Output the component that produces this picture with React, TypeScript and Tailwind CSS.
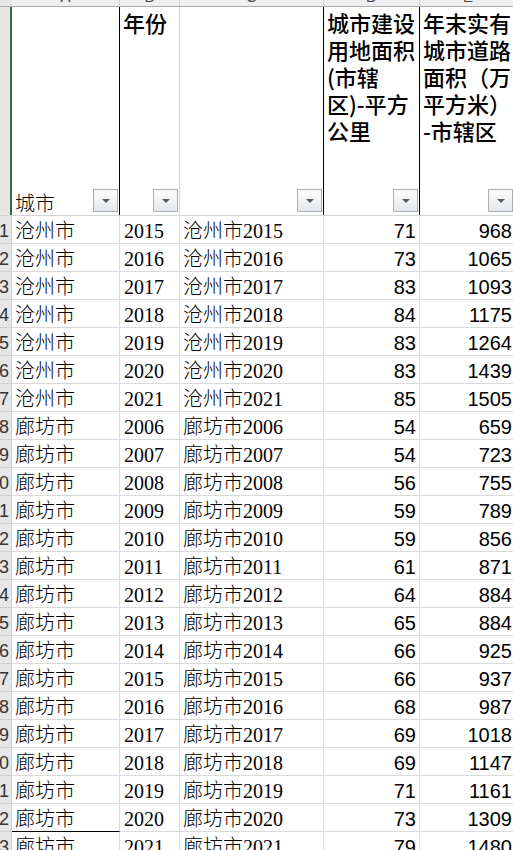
const rows: [string, number, number, number][] = [
  ['沧州市', 2015, 71, 968],
  ['沧州市', 2016, 73, 1065],
  ['沧州市', 2017, 83, 1093],
  ['沧州市', 2018, 84, 1175],
  ['沧州市', 2019, 83, 1264],
  ['沧州市', 2020, 83, 1439],
  ['沧州市', 2021, 85, 1505],
  ['廊坊市', 2006, 54, 659],
  ['廊坊市', 2007, 54, 723],
  ['廊坊市', 2008, 56, 755],
  ['廊坊市', 2009, 59, 789],
  ['廊坊市', 2010, 59, 856],
  ['廊坊市', 2011, 61, 871],
  ['廊坊市', 2012, 64, 884],
  ['廊坊市', 2013, 65, 884],
  ['廊坊市', 2014, 66, 925],
  ['廊坊市', 2015, 66, 937],
  ['廊坊市', 2016, 68, 987],
  ['廊坊市', 2017, 69, 1018],
  ['廊坊市', 2018, 69, 1147],
  ['廊坊市', 2019, 71, 1161],
  ['廊坊市', 2020, 73, 1309],
  ['廊坊市', 2021, 79, 1480],
];

function FilterButton() {
  return (
    <div className="absolute right-[1px] bottom-[3px] w-[25px] h-[23px] border border-[#a9aeb6] bg-gradient-to-b from-[#fdfdfd] to-[#e4e7eb] flex items-center justify-center">
      <div className="w-0 h-0 border-l-[4px] border-r-[4px] border-t-[4px] border-l-transparent border-r-transparent border-t-[#5a5a5a]" />
    </div>
  );
}

function ColLetter({ w, letter, last }: { w: string; letter: string; last?: boolean }) {
  return (
    <div className={`${w} shrink-0 h-full overflow-hidden flex justify-center ${last ? '' : 'border-r border-[#d2d2d2]'}`}>
      <span className="mt-[-12px] text-[15px] leading-[18px] text-[#444] font-['Liberation_Sans',sans-serif]">{letter}</span>
    </div>
  );
}

export default function App() {
  const serif = "font-['Liberation_Serif','Noto_Sans_CJK_SC',serif]";
  const sans = "font-['Liberation_Sans',sans-serif]";
  const head = "font-['Noto_Sans_CJK_SC',sans-serif] font-medium text-[22px] leading-[27px] text-black whitespace-nowrap";

  return (
    <div className="w-[513px] h-screen overflow-hidden bg-white">
      <div className="w-[620px]">
        {/* column letters strip */}
        <div className="flex h-[7px] bg-[#efefef] border-b border-[#ababab]">
          <div className="w-[12px] shrink-0 bg-[#e6e6e6]" />
          <ColLetter w="w-[108px]" letter="A" />
          <ColLetter w="w-[60px]" letter="B" />
          <ColLetter w="w-[144px]" letter="C" />
          <ColLetter w="w-[96px]" letter="D" />
          <ColLetter w="w-[96px]" letter="E" last />
        </div>

        {/* header row */}
        <div className="flex h-[209px] border-b border-[#d4d4d4]">
          <div className="w-[12px] shrink-0 bg-[#e6e6e6] border-r-2 border-[#217346]" />
          <div className="relative w-[108px] shrink-0 border-r border-black flex items-end pl-[3px]">
            <span className={`${serif} font-light text-[20px] leading-[22px] text-black`}>城市</span>
            <FilterButton />
          </div>
          <div className="relative w-[60px] shrink-0 border-r border-[#d4d4d4] pl-[3px] pt-[2px]">
            <div className={head}>年份</div>
            <FilterButton />
          </div>
          <div className="relative w-[144px] shrink-0 border-r border-black">
            <FilterButton />
          </div>
          <div className="relative w-[96px] shrink-0 border-r border-black pl-[3px] pt-[2px]">
            <div className={head}>
              城市建设<br />用地面积<br />(市辖<br />区)-平方<br />公里
            </div>
            <FilterButton />
          </div>
          <div className="relative w-[95px] shrink-0 border-r border-black pl-[3px] pt-[2px]">
            <div className={head}>
              年末实有<br />城市道路<br />面积（万<br />平方米）<br />-市辖区
            </div>
            <FilterButton />
          </div>
        </div>

        {/* data rows */}
        {rows.map(([city, year, area, road], i) => (
          <div key={i} className="flex h-[28px] text-black">
            <div className="w-[12px] shrink-0 h-full bg-[#e6e6e6] border-r border-b border-[#cfcfcf] overflow-hidden flex items-end justify-end pr-[2px]">
              <span className={`${sans} text-[18px] leading-[24px] text-[#333]`}>{i + 11}</span>
            </div>
            <div className={`w-[108px] shrink-0 h-full border-r border-[#dadada] border-b ${i === 21 ? 'border-b-black' : 'border-b-[#dadada]'} flex items-end pl-[3px]`}>
              <span className={`${serif} font-light text-[20px] leading-[24px]`}>{city}</span>
            </div>
            <div className="w-[60px] shrink-0 h-full border-r border-b border-[#dadada] flex items-end pl-[4px]">
              <span className={`${serif} text-[20px] leading-[24px]`}>{year}</span>
            </div>
            <div className="w-[144px] shrink-0 h-full border-r border-b border-[#dadada] flex items-end pl-[3px]">
              <span className={`${serif} font-light text-[20px] leading-[24px] whitespace-nowrap`}>{city}{year}</span>
            </div>
            <div className="w-[96px] shrink-0 h-full border-r border-b border-[#dadada] flex items-end justify-end pr-[3px]">
              <span className={`${sans} text-[20px] leading-[24px]`}>{area}</span>
            </div>
            <div className="w-[95px] shrink-0 h-full border-r border-b border-[#dadada] flex items-end justify-end pr-[2px]">
              <span className={`${sans} text-[20px] leading-[24px]`}>{road}</span>
            </div>
          </div>
        ))}
      </div>
    </div>
  );
}
